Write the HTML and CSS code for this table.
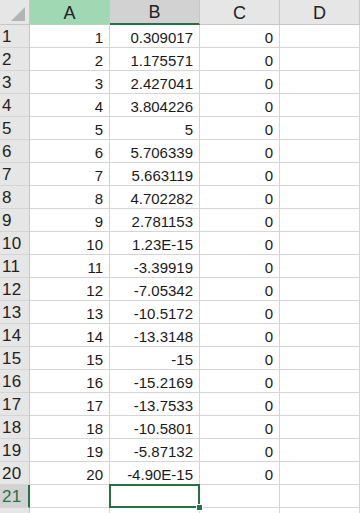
FILE: index.html
```html
<!DOCTYPE html>
<html>
<head>
<meta charset="utf-8">
<link rel="stylesheet" href="styles.css">
</head>
<body>
<div class="sheet">
  <div class="corner"><span class="tri"></span></div>
  <div class="ch ch-a">A</div>
  <div class="ch ch-b">B</div>
  <div class="ch">C</div>
  <div class="ch">D</div>

  <div class="rh">1</div><div class="c">1</div><div class="c">0.309017</div><div class="c">0</div><div class="c"></div>
  <div class="rh">2</div><div class="c">2</div><div class="c">1.175571</div><div class="c">0</div><div class="c"></div>
  <div class="rh">3</div><div class="c">3</div><div class="c">2.427041</div><div class="c">0</div><div class="c"></div>
  <div class="rh">4</div><div class="c">4</div><div class="c">3.804226</div><div class="c">0</div><div class="c"></div>
  <div class="rh">5</div><div class="c">5</div><div class="c">5</div><div class="c">0</div><div class="c"></div>
  <div class="rh">6</div><div class="c">6</div><div class="c">5.706339</div><div class="c">0</div><div class="c"></div>
  <div class="rh">7</div><div class="c">7</div><div class="c">5.663119</div><div class="c">0</div><div class="c"></div>
  <div class="rh">8</div><div class="c">8</div><div class="c">4.702282</div><div class="c">0</div><div class="c"></div>
  <div class="rh">9</div><div class="c">9</div><div class="c">2.781153</div><div class="c">0</div><div class="c"></div>
  <div class="rh">10</div><div class="c">10</div><div class="c">1.23E-15</div><div class="c">0</div><div class="c"></div>
  <div class="rh">11</div><div class="c">11</div><div class="c">-3.39919</div><div class="c">0</div><div class="c"></div>
  <div class="rh">12</div><div class="c">12</div><div class="c">-7.05342</div><div class="c">0</div><div class="c"></div>
  <div class="rh">13</div><div class="c">13</div><div class="c">-10.5172</div><div class="c">0</div><div class="c"></div>
  <div class="rh">14</div><div class="c">14</div><div class="c">-13.3148</div><div class="c">0</div><div class="c"></div>
  <div class="rh">15</div><div class="c">15</div><div class="c">-15</div><div class="c">0</div><div class="c"></div>
  <div class="rh">16</div><div class="c">16</div><div class="c">-15.2169</div><div class="c">0</div><div class="c"></div>
  <div class="rh">17</div><div class="c">17</div><div class="c">-13.7533</div><div class="c">0</div><div class="c"></div>
  <div class="rh">18</div><div class="c">18</div><div class="c">-10.5801</div><div class="c">0</div><div class="c"></div>
  <div class="rh">19</div><div class="c">19</div><div class="c">-5.87132</div><div class="c">0</div><div class="c"></div>
  <div class="rh">20</div><div class="c">20</div><div class="c">-4.90E-15</div><div class="c">0</div><div class="c"></div>
  <div class="rh rh-sel">21</div><div class="c"></div><div class="c sel"><span class="sel-box"></span><span class="handle"></span></div><div class="c"></div><div class="c"></div>
  <div class="rh"></div><div class="c"></div><div class="c"></div><div class="c"></div><div class="c"></div>
</div>
</body>
</html>
```
FILE: styles.css
```css
html, body {
  margin: 0;
  padding: 0;
  background: #ffffff;
  overflow: hidden;
}
.sheet {
  display: grid;
  grid-template-columns: 30px 80px 90px 80px 80px;
  grid-template-rows: 25px repeat(22, 23px);
  font-family: "Liberation Sans", Arial, sans-serif;
  font-size: 15px;
  color: #1a1a1a;
}
.sheet > div {
  box-sizing: border-box;
}
.corner {
  background: #e6e6e6;
  border-right: 1px solid #c6c6c6;
  border-bottom: 1px solid #c6c6c6;
  position: relative;
}
.tri {
  position: absolute;
  right: 4px;
  bottom: 3px;
  width: 0;
  height: 0;
  border-left: 14px solid transparent;
  border-bottom: 14px solid #b4b4b4;
}
.ch {
  background: #e6e6e6;
  border-right: 1px solid #c6c6c6;
  border-bottom: 1px solid #c6c6c6;
  display: flex;
  align-items: center;
  justify-content: center;
  font-size: 18px;
  color: #222;
  padding-top: 2px;
}
.ch-a {
  background: #a0d8b4;
}
.ch-b {
  background: #d2d2d2;
  border-bottom: 2px solid #217346;
}
.rh {
  background: #e6e6e6;
  border-right: 1px solid #c6c6c6;
  border-bottom: 1px solid #d4d4d4;
  display: flex;
  align-items: center;
  padding-left: 2px;
  padding-top: 1px;
  font-size: 17px;
  color: #222;
  letter-spacing: 0.3px;
}
.rh-sel {
  background: #d2d2d2;
  color: #217346;
  border-right: 2px solid #217346;
}
.c {
  border-right: 1px solid #d4d4d4;
  border-bottom: 1px solid #d4d4d4;
  display: flex;
  align-items: center;
  justify-content: flex-end;
  padding-right: 6px;
  padding-top: 2px;
  white-space: nowrap;
}
.sel {
  position: relative;
}
.sel-box {
  position: absolute;
  left: -1px;
  top: -1px;
  right: -1px;
  bottom: -1px;
  border: 2px solid #217346;
}
.handle {
  position: absolute;
  right: -4px;
  bottom: -4px;
  width: 5px;
  height: 5px;
  background: #217346;
  border: 1px solid #ffffff;
}
```
